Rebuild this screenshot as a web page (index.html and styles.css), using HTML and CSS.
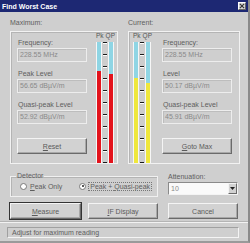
FILE: index.html
```html
<!DOCTYPE html>
<html>
<head>
<meta charset="utf-8">
<link rel="stylesheet" href="styles.css">
</head>
<body>
<div class="win">
  <div class="title">
    <span class="title-text">Find Worst Case</span>
    <span class="close"><svg width="7" height="6" viewBox="0 0 7 6"><path d="M1 0.5L6 5.5M6 0.5L1 5.5" stroke="#333" stroke-width="1.3"/></svg></span>
  </div>
  <div class="body">
    <div class="groups">
      <div class="group g-max">
        <div class="glabel">Maximum:</div>
        <div class="frame">
          <div class="fields">
            <div class="flabel first">Frequency:</div>
            <div class="field">228.55 MHz</div>
            <div class="flabel">Peak Level</div>
            <div class="field">56.65 dBµV/m</div>
            <div class="flabel">Quasi-peak Level</div>
            <div class="field">52.92 dBµV/m</div>
            <div class="btn btn-field"><u>R</u>eset</div>
          </div>
          <div class="meter meter-max">
            <div class="mlabel"><span>Pk</span><span>QP</span></div>
            <div class="bars">
              <div class="bar"><div class="fill red" style="height:92px"></div></div>
              <div class="ticks"></div>
              <div class="bar"><div class="fill red" style="height:89px"></div></div>
            </div>
          </div>
        </div>
      </div>
      <div class="group g-cur">
        <div class="glabel">Current:</div>
        <div class="frame">
          <div class="meter meter-cur">
            <div class="mlabel"><span>Pk</span><span>QP</span></div>
            <div class="bars">
              <div class="bar"><div class="fill yellow" style="height:85px"></div></div>
              <div class="ticks"></div>
              <div class="bar"><div class="fill yellow" style="height:80px"></div></div>
            </div>
          </div>
          <div class="fields fields-cur">
            <div class="flabel first">Frequency:</div>
            <div class="field">228.55 MHz</div>
            <div class="flabel">Level</div>
            <div class="field">50.17 dBµV/m</div>
            <div class="flabel">Quasi-peak Level</div>
            <div class="field">45.91 dBµV/m</div>
            <div class="btn btn-field"><u>G</u>oto Max</div>
          </div>
        </div>
      </div>
    </div>

    <div class="row2">
      <fieldset class="detector">
        <legend>Detector</legend>
        <div class="radios">
          <span class="radio"><span class="dot"></span><span class="rtext"><u>P</u>eak Only</span></span>
          <span class="radio checked"><span class="dot"></span><span class="rtext focus">Peak + <u>Q</u>uasi-peak</span></span>
        </div>
      </fieldset>
      <div class="atten">
        <div class="alabel">Attenuation:</div>
        <div class="select"><span class="sval">10</span><span class="sbtn"><svg width="5" height="3" viewBox="0 0 5 3"><path d="M0 0H5L2.5 3Z" fill="#222"/></svg></span></div>
      </div>
    </div>

    <div class="buttons">
      <div class="btn btn-default"><u>M</u>easure</div>
      <div class="btn btn-if"><u>I</u>F Display</div>
      <div class="btn btn-cancel">Cancel</div>
    </div>
  </div>
  <div class="sep"></div>
  <div class="status">Adjust for maximum reading</div>
</div>
</body>
</html>
```

FILE: styles.css
```css
* { box-sizing: border-box; }
html, body { margin: 0; padding: 0; }
body {
  width: 250px;
  height: 243px;
  overflow: hidden;
  background: #cfcfcf;
  font-family: "Liberation Sans", Arial, sans-serif;
  font-size: 7px;
  color: #5e5e5e;
}
.win {
  width: 250px;
  height: 243px;
  background: #cfcfcf;
  border-right: 2px solid #8a8a8a;
  border-bottom: 2px solid #9a9a9a;
  display: flex;
  flex-direction: column;
}
.title {
  height: 12px;
  background: #1d2873;
  color: #fff;
  display: flex;
  align-items: center;
  justify-content: space-between;
  padding: 0 2px 0 2px;
  flex: none;
}
.title-text {
  font-weight: bold;
  font-size: 7px;
}
.close {
  width: 8px;
  height: 8px;
  background: #d6d6d6;
  border: 1px solid;
  border-color: #fff #666 #666 #fff;
  display: flex;
  align-items: center;
  justify-content: center;
}
.body {
  padding: 7px 0 0 10px;
  flex: none;
}
.groups {
  display: flex;
  gap: 10px;
}
.glabel {
  height: 8px;
  line-height: 8px;
  margin-bottom: 4px;
}
.g-max .frame { width: 108px; }
.g-cur .frame { width: 112px; }
.frame {
  height: 133px;
  border: 1px solid #f2f2f2;
  box-shadow: inset 1px 1px 0 #b4b4b4;
  display: flex;
  align-items: flex-start;
}
.fields {
  width: 70px;
  margin-left: 6px;
  padding-top: 7px;
  display: flex;
  flex-direction: column;
}
.fields-cur { margin-left: 11px; }
.flabel {
  height: 8px;
  line-height: 8px;
  margin-top: 8px;
  padding-left: 1px;
}
.flabel.first { margin-top: 0; }
.field {
  height: 14px;
  margin-top: 1px;
  border: 1px solid #ededed;
  box-shadow: inset 1px 1px 0 #bdbdbd;
  color: #8a8a8a;
  line-height: 12px;
  padding-left: 2px;
}
.btn {
  height: 16px;
  border: 1px solid;
  border-color: #f4f4f4 #6a6a6a #6a6a6a #f4f4f4;
  box-shadow: inset -1px -1px 0 #a8a8a8;
  display: flex;
  align-items: center;
  justify-content: center;
  color: #5a5a5a;
  background: #d2d2d2;
}
.btn-field {
  margin-top: 14px;
}
.meter {
  width: 18px;
  display: flex;
  flex-direction: column;
}
.meter-max { margin-left: 9px; }
.meter-cur { margin-left: 4px; }
.mlabel {
  height: 8px;
  line-height: 8px;
  display: flex;
  justify-content: space-between;
  margin: 0 -1px 2px 0;
  font-size: 6.5px;
  color: #555;
}
.bars {
  height: 121px;
  display: flex;
}
.bar {
  width: 6px;
  height: 100%;
  border-left: 1px solid #f6f6f6;
  border-right: 1px solid #f6f6f6;
  background: #8fd5e4;
  display: flex;
  flex-direction: column;
  justify-content: flex-end;
}
.fill { width: 100%; }
.red { background: #e3131c; }
.yellow { background: #efe73c; }
.ticks {
  width: 6px;
  height: 100%;
  background-color: #cdcdcd;
  background-image: linear-gradient(to bottom, transparent 0 10px, #1a1a1a 10px 11px, #ffffff 11px 12px);
  background-size: 4px 12px;
  background-repeat: repeat-y;
  background-position: 1px 2px;
}
.row2 {
  margin-top: 8px;
  display: flex;
  gap: 10px;
}
.detector {
  width: 148px;
  margin: 0;
  padding: 0 0 4px 0;
  border: 1px solid #f0f0f0;
  box-shadow: inset 1px 1px 0 #b4b4b4;
}
.detector legend {
  padding: 0 1px;
  margin-left: 5px;
  line-height: 8px;
  height: 8px;
}
.radios {
  height: 12px;
  display: flex;
  align-items: center;
  padding-left: 9px;
}
.radio {
  display: flex;
  align-items: center;
  gap: 3px;
}
.radio + .radio { margin-left: 17px; }
.dot {
  width: 7px;
  height: 7px;
  border-radius: 50%;
  background: #fff;
  border: 1px solid #7a7a7a;
  position: relative;
}
.radio.checked .dot::after {
  content: "";
  position: absolute;
  left: 1.5px;
  top: 1.5px;
  width: 2px;
  height: 2px;
  border-radius: 50%;
  background: #222;
}
.rtext.focus {
  outline: 1px dotted #777;
  padding: 0 1px;
}
.atten {
  width: 70px;
  display: flex;
  flex-direction: column;
}
.alabel {
  height: 8px;
  line-height: 8px;
  margin-top: 1px;
}
.select {
  height: 13px;
  margin-top: 1px;
  background: #fafafa;
  border: 1px solid;
  border-color: #8a8a8a #f4f4f4 #f4f4f4 #8a8a8a;
  display: flex;
  align-items: stretch;
  justify-content: space-between;
}
.sval {
  color: #8a8a8a;
  line-height: 11px;
  padding-left: 2px;
}
.sbtn {
  width: 9px;
  background: #d2d2d2;
  border: 1px solid;
  border-color: #f4f4f4 #6a6a6a #6a6a6a #f4f4f4;
  display: flex;
  align-items: center;
  justify-content: center;
}
.buttons {
  margin-top: 6px;
  display: flex;
}
.btn-default {
  width: 71px;
  outline: 1px solid #333;
}
.btn-if {
  width: 70px;
  margin-left: 7px;
}
.btn-cancel {
  width: 70px;
  margin-left: 10px;
}
.sep {
  margin-top: 3px;
  height: 1px;
  background: #f2f2f2;
  box-shadow: 0 -1px 0 #b4b4b4;
}
.status {
  margin: 4px 0 0 7px;
  width: 232px;
  height: 11px;
  border: 1px solid;
  border-color: #a0a0a0 #f4f4f4 #f4f4f4 #a0a0a0;
  line-height: 9px;
  padding-left: 4px;
}
```
